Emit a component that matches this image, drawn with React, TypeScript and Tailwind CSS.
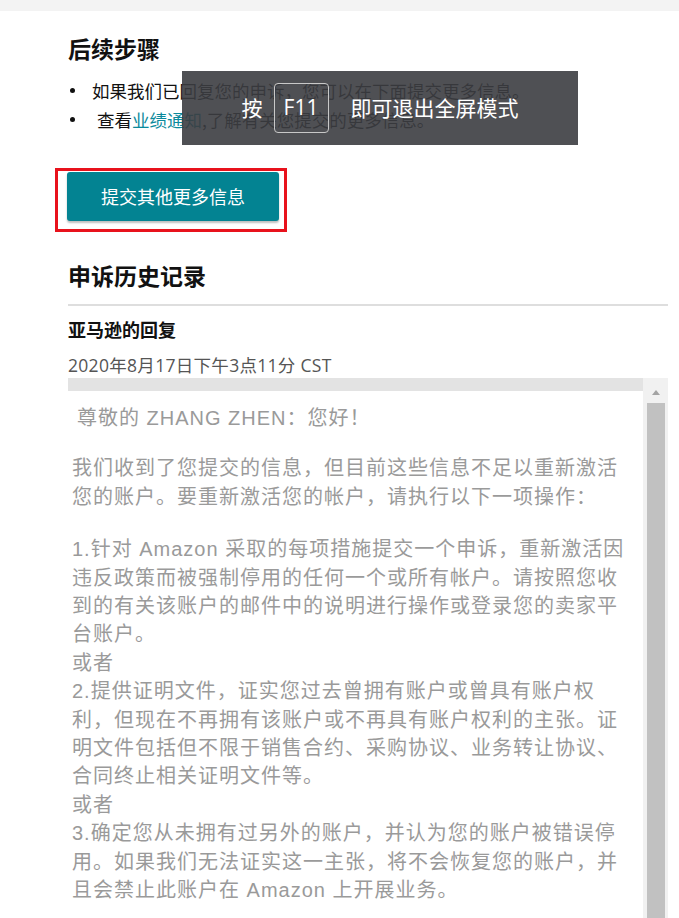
import React from "react";

const cjk = { fontFamily: '"Noto Sans CJK SC", sans-serif' };
const latinCjk = { fontFamily: '"Liberation Sans", "Noto Sans CJK SC", sans-serif' };
const openCjk = { fontFamily: '"Open Sans", "Noto Sans CJK SC", sans-serif' };

const para3 = [
  "1.针对 Amazon 采取的每项措施提交一个申诉，重新激活因",
  "违反政策而被强制停用的任何一个或所有帐户。请按照您收",
  "到的有关该账户的邮件中的说明进行操作或登录您的卖家平",
  "台账户。",
  "或者",
  "2.提供证明文件，证实您过去曾拥有账户或曾具有账户权",
  "利，但现在不再拥有该账户或不再具有账户权利的主张。证",
  "明文件包括但不限于销售合约、采购协议、业务转让协议、",
  "合同终止相关证明文件等。",
  "或者",
  "3.确定您从未拥有过另外的账户，并认为您的账户被错误停",
  "用。如果我们无法证实这一主张，将不会恢复您的账户，并",
  "且会禁止此账户在 Amazon 上开展业务。",
];

const Bullet = ({ children, indent }: { children: React.ReactNode; indent?: boolean }) => (
  <li className="flex items-center h-[29px]">
    <span className="w-[5px] h-[5px] rounded-full bg-[#111] ml-[2px] shrink-0" />
    <span className={indent ? "ml-[22px]" : "ml-[17px]"}>{children}</span>
  </li>
);

const FullscreenHint = () => (
  <div className="absolute left-[182px] top-[71px] w-[396px] h-[74px] bg-[#3c3d41]/90 flex items-center justify-center text-white text-[21px]" style={cjk}>
    <span>按</span>
    <span className="ml-[11px] w-[55px] h-[50px] border-[1.5px] border-[#c8c8c8] rounded-[4px] flex items-center justify-center" style={openCjk}>
      F11
    </span>
    <span className="ml-[22px]">即可退出全屏模式</span>
  </div>
);

export default function App() {
  return (
    <div className="relative w-[679px] h-[918px] overflow-hidden bg-white text-[#111]" style={cjk}>
      <div className="h-[11px] bg-[#f3f3f3]" />

      <div className="pl-[68px] w-[668px]">
        <h2 className="mt-[22px] text-[23px] leading-[30px] font-semibold">后续步骤</h2>

        <ul className="mt-[13px] text-[17.5px] leading-[29px]">
          <Bullet>如果我们已回复您的申诉，您可以在下面提交更多信息。</Bullet>
          <Bullet indent>
            查看<span className="text-[#0b8a9c]">业绩通知</span>,了解有关您提交的更多信息。
          </Bullet>
        </ul>

        <div className="mt-[34px] -ml-[13px] w-[232px] h-[64px] border-[3px] border-[#e8121c] pl-[9px] pt-[1px]">
          <button className="w-[212px] h-[49px] rounded-[3px] bg-[#038392] text-white text-[18px] shadow-[0_2px_2px_rgba(0,0,0,0.25)]">
            提交其他更多信息
          </button>
        </div>

        <h2 className="mt-[28px] text-[23px] leading-[30px] font-semibold">申诉历史记录</h2>
        <div className="mt-[14px] h-[2px] bg-[#dedede]" />

        <h3 className="mt-[10px] text-[18px] leading-[26px] font-bold">亚马逊的回复</h3>
        <p className="mt-[10px] text-[17.5px] leading-[26px] tracking-[0.3px] text-[#555]" style={openCjk}>
          2020年8月17日下午3点11分 CST
        </p>

        <div className="flex h-[560px]">
          <div className="flex-1">
            <div className="h-[13px] bg-[#e3e3e3]" />
            <div className="pl-[4px] pt-[13px] text-[20px] leading-[28.4px] tracking-[1px] text-[#9a9a9a] whitespace-nowrap" style={latinCjk}>
              <p className="pl-[5px]">尊敬的 ZHANG ZHEN：您好！</p>
              <div className="mt-[22px]">
                <p>我们收到了您提交的信息，但目前这些信息不足以重新激活</p>
                <p>您的账户。要重新激活您的帐户，请执行以下一项操作：</p>
              </div>
              <div className="mt-[24px]">
                {para3.map((line, i) => (
                  <p key={i}>{line}</p>
                ))}
              </div>
            </div>
          </div>

          <div className="w-[25px] bg-[#f1f1f1] flex flex-col items-center">
            <svg width="12" height="25" viewBox="0 0 12 25" className="shrink-0">
              <path d="M2 17 L6 12 L10 17 Z" fill="#a3a3a3" />
            </svg>
            <div className="w-[18px] flex-1 bg-[#c1c1c1]" />
          </div>
        </div>
      </div>

      <FullscreenHint />
    </div>
  );
}
